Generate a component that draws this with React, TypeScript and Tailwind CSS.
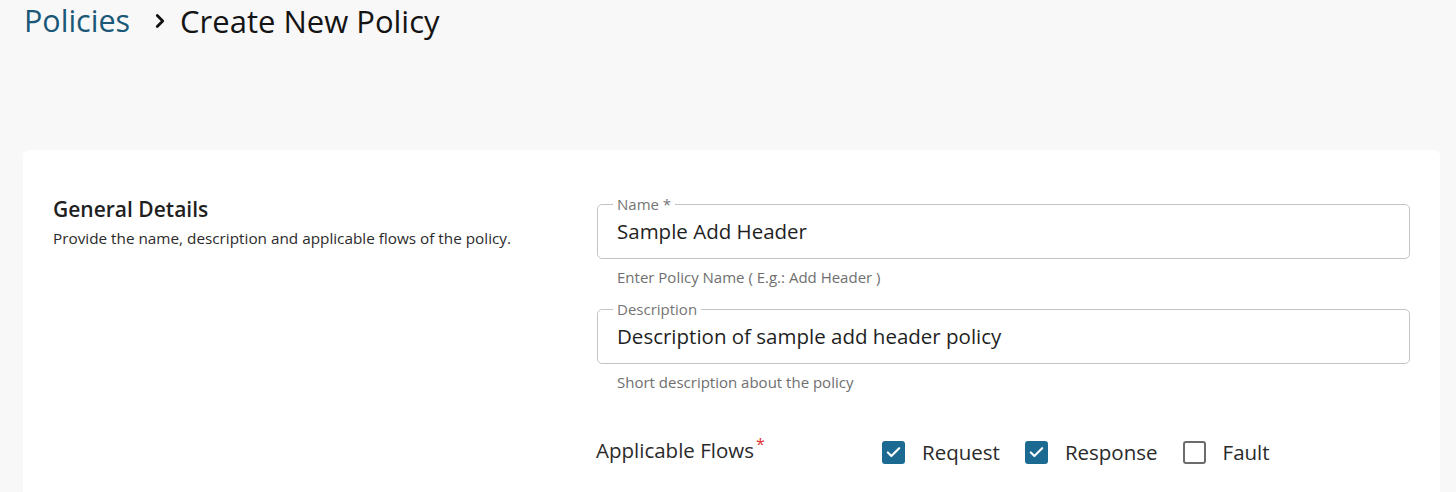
import React from 'react';
import { ChevronRight, Check } from 'lucide-react';

function OutlinedField({ label, value, helper }: { label: string; value: string; helper: string }) {
  return (
    <div>
      <div className="relative h-[55px] rounded-[5px] border border-[#c4c4c4] bg-white flex items-center px-[19px]">
        <span className="absolute left-[15px] top-0 -translate-y-[55%] bg-white px-[4px] text-[15px] leading-[17px] text-[#757575]">
          {label}
        </span>
        <span className="text-[20.5px] text-[#1f1f1f]">{value}</span>
      </div>
      <div className="mt-[9px] pl-[20px] text-[15px] leading-[18px] text-[#6f6f6f]">{helper}</div>
    </div>
  );
}

function FlowCheckbox({ label, checked }: { label: string; checked: boolean }) {
  return (
    <label className="flex items-center">
      {checked ? (
        <span className="flex h-[23px] w-[23px] items-center justify-center rounded-[3px] bg-[#1c6a92]">
          <Check className="h-[17px] w-[17px] text-white" strokeWidth={3} />
        </span>
      ) : (
        <span className="h-[23px] w-[23px] rounded-[3px] border-[2px] border-[#6b6b6b] bg-white" />
      )}
      <span className="ml-[17px] text-[20.5px] text-[#2a2a2a]">{label}</span>
    </label>
  );
}

export default function App() {
  return (
    <div className="h-[492px] overflow-hidden bg-[#f8f8f8] font-['Open_Sans',sans-serif]">
      <div className="flex h-[42px] items-center pl-[24px]">
        <span className="text-[30.5px] text-[#1b5877]">Policies</span>
        <ChevronRight className="ml-[19px] mr-[9px] h-[22px] w-[22px] text-[#111]" strokeWidth={3} />
        <span className="text-[31px] text-[#141414]">Create New Policy</span>
      </div>

      <div className="ml-[23px] mr-[16px] mt-[108px] rounded-[6px] bg-white px-[30px] pt-[54px] pb-[60px]">
        <div className="flex">
          <div className="w-[544px] shrink-0">
            <div className="-mt-[9px] text-[21px] font-semibold leading-[28px] text-[#1f1f1f]">General Details</div>
            <div className="mt-[5px] text-[15.3px] leading-[20px] text-[#2b2b2b]">
              Provide the name, description and applicable flows of the policy.
            </div>
          </div>
          <div className="flex-1">
            <OutlinedField label="Name *" value="Sample Add Header" helper="Enter Policy Name ( E.g.: Add Header )" />
            <div className="mt-[23px]">
              <OutlinedField
                label="Description"
                value="Description of sample add header policy"
                helper="Short description about the policy"
              />
            </div>
            <div className="mt-[42px] flex items-center">
              <div className="w-[286px] shrink-0 -ml-[1px] text-[20.5px] text-[#2a2a2a]">
                Applicable Flows<sup className="ml-[2px] text-[16px] text-[#e0302f]">*</sup>
              </div>
              <div className="mt-[4px] flex items-center gap-[25px]">
                <FlowCheckbox label="Request" checked />
                <FlowCheckbox label="Response" checked />
                <FlowCheckbox label="Fault" checked={false} />
              </div>
            </div>
          </div>
        </div>
      </div>
    </div>
  );
}
